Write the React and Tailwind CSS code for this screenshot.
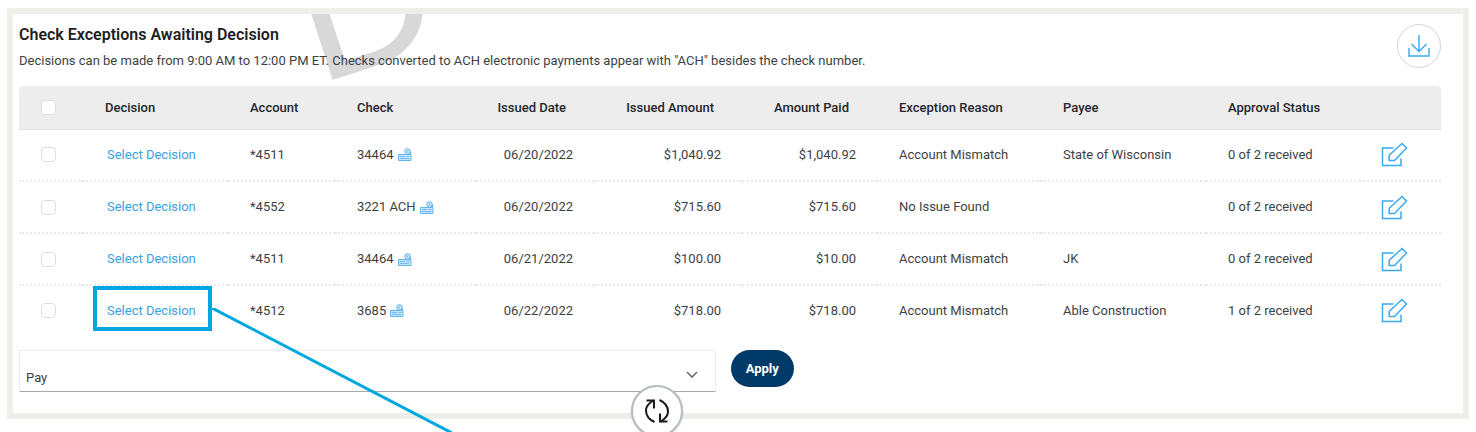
import React, { useState } from 'react'

const exceptions = [
  { id: 1, account: '*4511', check: '34464', date: '06/20/2022', issued: '$1,040.92', paid: '$1,040.92', reason: 'Account Mismatch', payee: 'State of Wisconsin', status: '0 of 2 received' },
  { id: 2, account: '*4552', check: '3221 ACH', date: '06/20/2022', issued: '$715.60', paid: '$715.60', reason: 'No Issue Found', payee: '', status: '0 of 2 received' },
  { id: 3, account: '*4511', check: '34464', date: '06/21/2022', issued: '$100.00', paid: '$10.00', reason: 'Account Mismatch', payee: 'JK', status: '0 of 2 received' },
  { id: 4, account: '*4512', check: '3685', date: '06/22/2022', issued: '$718.00', paid: '$718.00', reason: 'Account Mismatch', payee: 'Able Construction', status: '1 of 2 received', highlighted: true }
]

const checkboxClass = 'block w-[15px] h-[15px] mx-auto appearance-none rounded-[4px] border border-[#dcdfe2] bg-white checked:bg-[#3a9fe0]'

function EditIcon() {
  return (
    <svg viewBox="0 0 27 25" className="w-[27px] h-[25px]" fill="none" stroke="#3ba9ee" strokeWidth="1.5">
      <path d="M12.5 6H1.5v17.5h18.5v-7" />
      <path d="M21 1.5l4.5 4.5-12 12.5H8.2v-5.2z" />
    </svg>
  )
}

function CheckImageIcon() {
  return (
    <svg viewBox="0 0 14 13" className="inline-block w-[14px] h-[13px]" fill="#c3e3f8" stroke="#62b4ec" strokeWidth="1">
      <path d="M.5 6.5h12.500v6H.5z" />
      <circle cx="9.500" cy="3.500" r="2.800" />
      <path d="M12.500 3.500v3" />
      <path d="M2 8.500h5M2 10.500h9M8.500 8.500h3M9.500 2.500v2" strokeWidth=".8" />
    </svg>
  )
}

function DownloadIcon() {
  return (
    <svg viewBox="0 0 22 22" className="w-[22px] h-[22px]" fill="none" stroke="#3ba9ee" strokeWidth="1.4">
      <path d="M1 13v8h20v-8" />
      <path d="M11 0v16.500M3.500 9l7.500 7.500L18.500 9" />
    </svg>
  )
}

function RefreshIcon() {
  return (
    <svg viewBox="0 0 24 24" className="w-6 h-6" fill="none" stroke="#1a1a1a" strokeWidth="2">
      <path d="M9.500 23C4 20.500 1 16 1 11.500 1 7.500 4 4 8.500 1.500" />
      <path d="M1.500 1.500h7.500v8" />
      <path d="M14.500 1C20 3.500 23 8 23 12.500c0 4-3 7.500-7.500 10" />
      <path d="M22.500 22.500H15v-8" />
    </svg>
  )
}

function ExceptionRow({ item, checked, onToggle }) {
  return (
    <tr className="h-[52px] border-b-2 border-dotted border-[#e8e9eb] last:h-[50px] last:border-b-0">
      <td className="pr-1.5">
        <input
          type="checkbox"
          aria-label={`Select check ${item.check}`}
          checked={checked}
          onChange={onToggle}
          className={checkboxClass}
        />
      </td>
      <td className="relative pl-6">
        <a href="#decision" className="text-[#3a9fe0]">Select Decision</a>
        {item.highlighted && (
          <>
            <div className="absolute top-0 left-2.5 right-4 h-[45px] border-4 border-[#00a7e1] pointer-events-none" />
            <svg viewBox="0 0 240 126" className="absolute top-[22px] left-[129px] w-[240px] h-[126px] pointer-events-none">
              <line x1="0" y1="0" x2="240" y2="125" stroke="#00a7e1" strokeWidth="3" />
            </svg>
          </>
        )}
      </td>
      <td className="pl-[22px]">{item.account}</td>
      <td className="pl-[22px]">
        <div className="flex items-center gap-1">
          {item.check}
          <CheckImageIcon />
        </div>
      </td>
      <td className="pr-[21px] text-right">{item.date}</td>
      <td className="pr-[21px] text-right">{item.issued}</td>
      <td className="pr-[21px] text-right">{item.paid}</td>
      <td className="pl-[22px]">{item.reason}</td>
      <td className="pl-[22px]">{item.payee}</td>
      <td className="pl-[22px]">{item.status}</td>
      <td className="pl-[21px]">
        <button aria-label={`Edit check ${item.check}`} className="block">
          <EditIcon />
        </button>
      </td>
    </tr>
  )
}

function App() {
  const [selected, setSelected] = useState([])
  const [action, setAction] = useState('Pay')

  const toggle = (id) => {
    setSelected(prev =>
      prev.includes(id) ? prev.filter(x => x !== id) : [...prev, id]
    )
  }

  const allSelected = selected.length === exceptions.length

  const toggleAll = () => {
    setSelected(allSelected ? [] : exceptions.map(item => item.id))
  }

  return (
    <div className="relative overflow-hidden bg-white px-[7px] pt-2 pb-3.5 font-['Roboto',sans-serif] text-[13px] text-[#3c3f44]">
      <main className="relative border-6 border-[#eeefe8] pl-1.5 pr-[22px] pb-[21px]">
        {/* Watermark */}
        <svg className="absolute top-0 left-0 w-[480px] h-20 pointer-events-none" aria-hidden="true">
          <text x="304" y="71" transform="rotate(-18 304 71)" fill="#d8d8d8" className="font-['Lato',sans-serif] text-[180px]">D</text>
        </svg>

        {/* Header */}
        <header className="relative flex justify-between pt-2.5 h-[72px]">
          <div>
            <h1 className="text-base leading-[22px] font-semibold text-[#1d1f23]">Check Exceptions Awaiting Decision</h1>
            <p className="mt-1.5 leading-[18px]">
              Decisions can be made from 9:00 AM to 12:00 PM ET. Checks converted to ACH electronic payments appear with "ACH" besides the check number.
            </p>
          </div>
          <button
            aria-label="Download"
            className="w-11 h-11 flex items-center justify-center rounded-full border border-[#d3d5d8] bg-white"
          >
            <DownloadIcon />
          </button>
        </header>

        {/* Exceptions table */}
        <table className="relative z-10 w-full table-fixed border-collapse text-left whitespace-nowrap">
          <colgroup>
            <col className="w-[64px]" />
            <col className="w-[145px]" />
            <col className="w-[107px]" />
            <col className="w-[141px]" />
            <col className="w-[118px]" />
            <col className="w-[148px]" />
            <col className="w-[135px]" />
            <col className="w-[164px]" />
            <col className="w-[165px]" />
            <col className="w-[154px]" />
            <col className="w-[81px]" />
          </colgroup>
          <thead className="text-[#24272c]">
            <tr className="h-[43px] bg-[#ededed] border-b border-[#e0e0e0] [&>th]:font-medium [&>th]:pt-px">
              <th className="rounded-tl pr-1.5">
                <input
                  type="checkbox"
                  aria-label="Select all checks"
                  checked={allSelected}
                  onChange={toggleAll}
                  className={checkboxClass}
                />
              </th>
              <th className="pl-[22px]">Decision</th>
              <th className="pl-[22px]">Account</th>
              <th className="pl-[22px]">Check</th>
              <th className="pr-7 text-right">Issued Date</th>
              <th className="pr-7 text-right">Issued Amount</th>
              <th className="pr-7 text-right">Amount Paid</th>
              <th className="pl-[22px]">Exception Reason</th>
              <th className="pl-[22px]">Payee</th>
              <th className="pl-[22px]">Approval Status</th>
              <th className="rounded-tr" />
            </tr>
          </thead>
          <tbody>
            {exceptions.map((item) => (
              <ExceptionRow
                key={item.id}
                item={item}
                checked={selected.includes(item.id)}
                onToggle={() => toggle(item.id)}
              />
            ))}
          </tbody>
        </table>

        {/* Bulk action */}
        <div className="flex gap-[15px] pt-[15px]">
          <div className="relative w-[49%]">
            <select
              aria-label="Decision for selected checks"
              value={action}
              onChange={(e) => setAction(e.target.value)}
              className="block w-full h-[42px] pt-[14px] pl-1.5 appearance-none border border-[#ececec] border-b-[#a9a9a9]"
            >
              <option>Pay</option>
              <option>Return</option>
            </select>
            <svg viewBox="0 0 12 8" className="absolute right-[18px] top-[21px] w-3 h-2 pointer-events-none" fill="none" stroke="#6b6e73" strokeWidth="1.6">
              <path d="M1 1l5 5 5-5" />
            </svg>
          </div>
          <button className="h-[37px] w-[63px] rounded-full bg-[#003a68] font-bold text-white">
            Apply
          </button>
        </div>
      </main>

      <button
        aria-label="Refresh"
        className="absolute z-20 -bottom-1 left-[44.5%] -translate-x-1/2 w-[52px] h-[52px] flex items-center justify-center rounded-full border-2 border-[#b3bac2] bg-white shadow"
      >
        <RefreshIcon />
      </button>
    </div>
  )
}

export default App
